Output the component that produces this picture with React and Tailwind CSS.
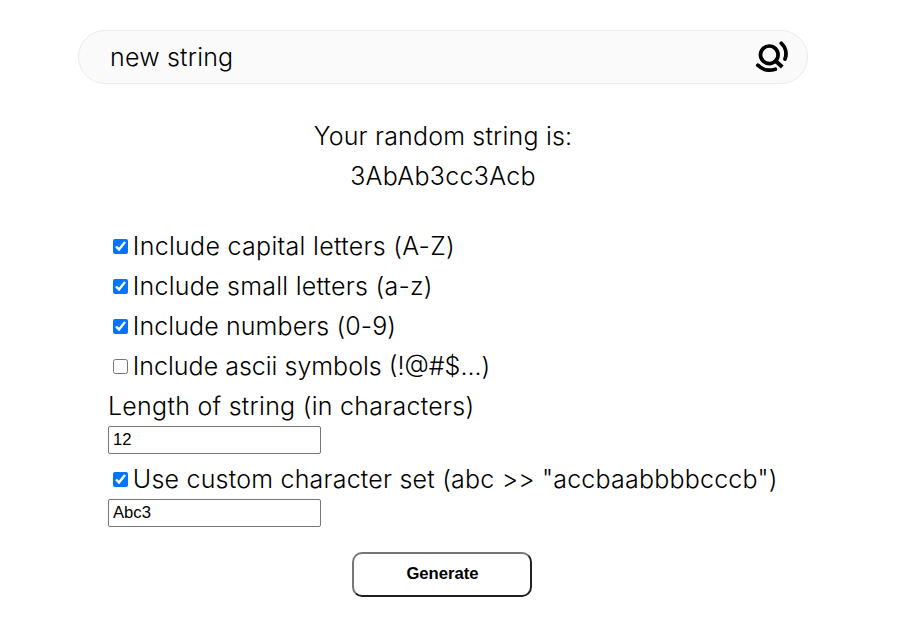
const options = [
  ["Include capital letters (A-Z)", true, "tracking-[0.3px]"],
  ["Include small letters (a-z)", true, "tracking-[0.24px]"],
  ["Include numbers (0-9)", true, "tracking-[0.1px]"],
  ["Include ascii symbols (!@#$...)", false, "tracking-normal"],
];

function Option({ label, checked, tracking }) {
  return (
    <label className={`flex h-10 items-center whitespace-nowrap ${tracking}`}>
      <input type="checkbox" defaultChecked={checked} className="mr-[4.8px] ml-[5px] h-[15px] w-[15px] shrink-0" />
      {label}
    </label>
  );
}

function Field({ value }) {
  return (
    <input
      defaultValue={value}
      className="block h-7 w-[213px] rounded-[2px] border border-[#767676] bg-white px-1 font-['Liberation_Sans',Arial,sans-serif] text-[16.67px] tracking-normal"
    />
  );
}

export default function App() {
  return (
    <main className="h-[628px] overflow-hidden bg-white pt-[30px] pl-[78px] font-[Inter,sans-serif] text-[25px] leading-10 font-light text-black [font-optical-sizing:none]">
      <div className="flex h-[54px] w-[730px] items-center justify-between rounded-full border border-[#ebebeb] bg-[#fafafa] pr-[18px] pl-[31px]">
        <span className="tracking-[0.2px]">new string</span>
        <svg className="h-8 w-[34px]" viewBox="0 0 34 32" fill="none" stroke="black" strokeWidth="3.7" strokeLinecap="round">
          <circle cx="14.3" cy="13.8" r="8.8" />
          <path strokeWidth="4" strokeLinecap="butt" d="m19.5 19 7.8 7" />
          <path d="M2.8 24.2C7.5 28.7 14 30.3 20.3 28.2M26.3 2.3C30.5 6.4 32 12.5 30 18" />
        </svg>
      </div>
      <section className="mt-8 w-[730px] text-center">
        <p className="tracking-[0.18px]">Your random string is:</p>
        <p className="tracking-[0.3px]">3AbAb3cc3Acb</p>
      </section>
      <form className="mt-[30px] ml-[30px] w-[670px]">
        {options.map(([label, checked, tracking]) => (
          <Option key={label} label={label} checked={checked} tracking={tracking} />
        ))}
        <p className="tracking-[0.26px]">Length of string (in characters)</p>
        <Field value="12" />
        <div className="mt-[5px]">
          <Option label={'Use custom character set (abc >> "accbaabbbbcccb")'} checked tracking="tracking-[0.21px]" />
        </div>
        <Field value="Abc3" />
        <button type="button" className="mt-[25px] ml-[244px] block h-[45px] w-[180px] rounded-[10px] border-2 border-t-[#767676] border-r-[#212121] border-b-[#212121] border-l-[#767676] bg-white pb-0.5 pl-px font-['Liberation_Sans',Arial,sans-serif] text-[16.67px] leading-5 font-bold tracking-normal">Generate</button>
      </form>
    </main>
  );
}
